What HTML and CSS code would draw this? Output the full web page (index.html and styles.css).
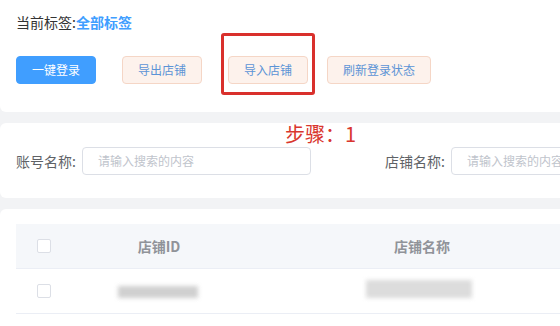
FILE: index.html
```html
<!DOCTYPE html>
<html lang="zh">
<head>
<meta charset="utf-8">
<link rel="stylesheet" href="styles.css">
</head>
<body>
<div class="page">
  <section class="card card-top">
    <div class="tag-line">当前标签:<span class="tag-all">全部标签</span></div>
    <div class="btn-row">
      <button class="btn btn-primary">一键登录</button>
      <button class="btn btn-plain b2">导出店铺</button>
      <button class="btn btn-plain b3">导入店铺</button>
      <button class="btn btn-plain b4">刷新登录状态</button>
    </div>
  </section>
  <section class="card card-search">
    <label class="field-label">账号名称:</label>
    <div class="input in1">请输入搜索的内容</div>
    <label class="field-label l2">店铺名称:</label>
    <div class="input in2">请输入搜索的内容</div>
  </section>
  <section class="card card-table">
    <div class="table">
      <div class="tr th">
        <div class="cell c-check"><span class="checkbox"></span></div>
        <div class="cell c-id">店铺ID</div>
        <div class="cell c-name">店铺名称</div>
      </div>
      <div class="tr td">
        <div class="cell c-check"><span class="checkbox"></span></div>
        <div class="cell c-id"><span class="blur blur-id"></span></div>
        <div class="cell c-name"><span class="blur blur-name"></span></div>
      </div>
    </div>
  </section>
  <div class="highlight-box"></div>
  <div class="step-note">步骤：1</div>
</div>
</body>
</html>
```
FILE: styles.css
```css
html, body {
  margin: 0;
  padding: 0;
  overflow: hidden;
  background: #f2f3f5;
  font-family: "Noto Sans CJK SC", "Microsoft YaHei", sans-serif;
}
.page {
  position: relative;
  width: 640px;
}
.card {
  background: #fff;
  border-radius: 6px;
  margin-bottom: 11px;
  box-sizing: border-box;
}
.card-top {
  border-radius: 0 0 6px 6px;
  padding: 12px 16px 28px;
  height: 112px;
}
.tag-line {
  font-size: 14px;
  line-height: 20px;
  color: #333;
}
.tag-all {
  color: #409eff;
  font-weight: bold;
}
.btn-row {
  display: flex;
  margin-top: 24px;
}
.btn {
  height: 28px;
  box-sizing: border-box;
  font-family: inherit;
  font-size: 12px;
  border-radius: 4px;
  padding: 0;
  width: 80px;
  line-height: 26px;
}
.btn-primary {
  background: #409eff;
  border: 1px solid #409eff;
  color: #fff;
}
.btn-plain {
  background: #fdf2ec;
  border: 1px solid #f5d6c6;
  color: #5c94d6;
}
.b2 { margin-left: 26px; }
.b3 { margin-left: 26px; }
.b4 { margin-left: 19px; width: 104px; }
.card-search {
  height: 75px;
  padding: 24px 0 0 16px;
  display: flex;
  align-items: flex-start;
}
.field-label {
  font-size: 14px;
  line-height: 28px;
  color: #606266;
  white-space: nowrap;
  flex-shrink: 0;
  width: 60px;
  margin-right: 6px;
}
.l2 {
  margin-left: 74px;
}
.input {
  flex-shrink: 0;
  height: 28px;
  box-sizing: border-box;
  border: 1px solid #dcdfe6;
  border-radius: 4px;
  font-size: 12px;
  line-height: 26px;
  color: #c0c4cc;
  padding-left: 15px;
  width: 229px;
  white-space: nowrap;
  overflow: hidden;
}
.card-table {
  padding: 15px 16px 0;
  height: 140px;
}
.tr {
  display: grid;
  grid-template-columns: 55px 176px 350px;
  border-bottom: 1px solid #ebeef5;
  align-items: center;
}
.th {
  height: 44px;
  background: #f5f7fa;
  color: #909399;
  font-weight: bold;
  font-size: 14px;
}
.td {
  height: 45px;
  box-sizing: border-box;
}
.cell {
  text-align: center;
}
.c-check {
  display: flex;
  justify-content: center;
}
.checkbox {
  display: block;
  width: 14px;
  height: 14px;
  box-sizing: border-box;
  border: 1px solid #dcdfe6;
  border-radius: 2px;
  background: #fff;
}
.blur {
  display: inline-block;
  background: #c8c8c8;
  filter: blur(2px);
  opacity: 0.85;
}
.blur-id {
  width: 80px;
  height: 12px;
  margin-right: 2px;
}
.blur-name {
  width: 106px;
  height: 18px;
  margin-right: 6px;
  background: #d6d6d6;
}
.highlight-box {
  position: absolute;
  left: 221px;
  top: 33px;
  width: 94px;
  height: 62px;
  box-sizing: border-box;
  border: 3px solid #d9302c;
  border-radius: 3px;
}
.step-note {
  position: absolute;
  left: 285px;
  top: 121px;
  font-size: 20px;
  line-height: 26px;
  color: #d9362e;
}
```
